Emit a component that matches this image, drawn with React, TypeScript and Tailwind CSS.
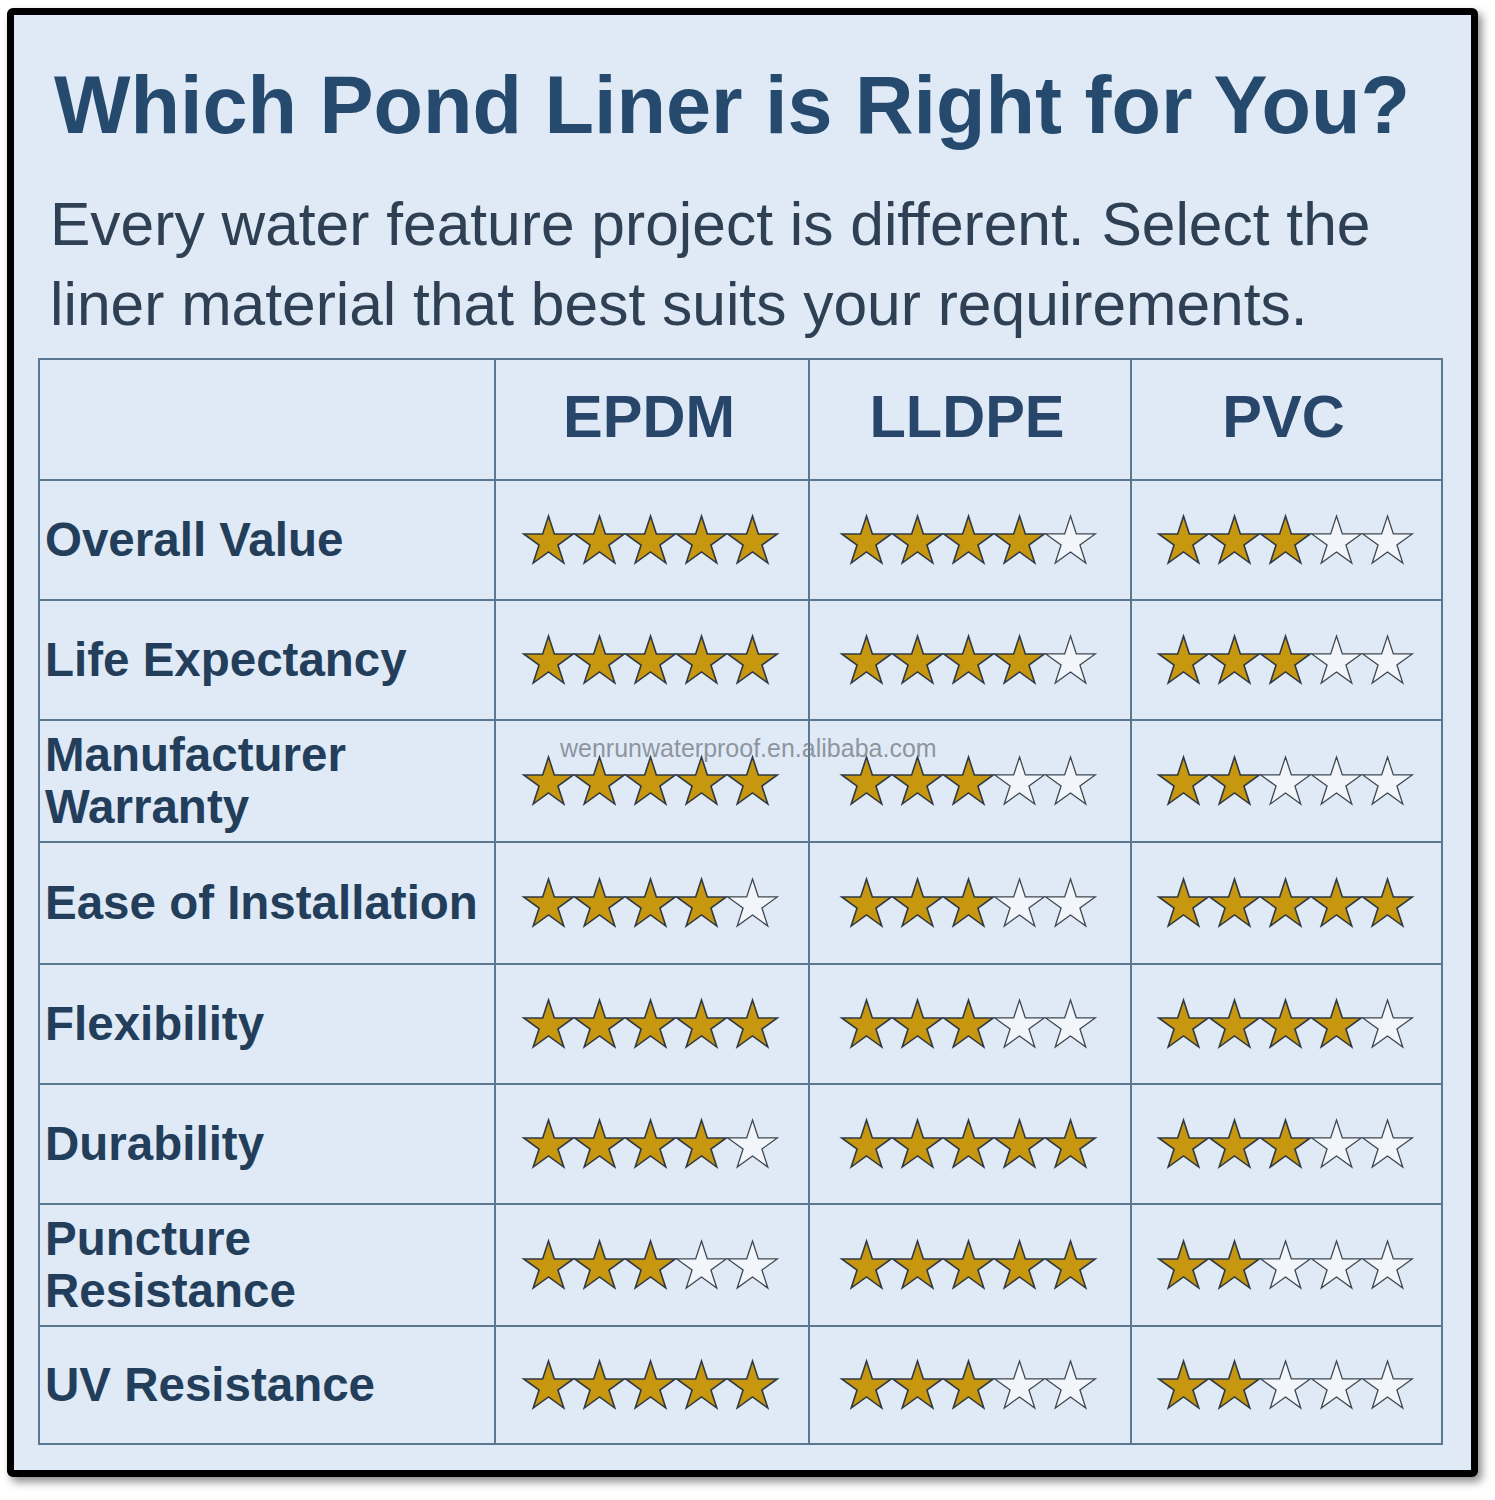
const rows: { label: string[]; ratings: number[] }[] = [
  { label: ["Overall Value"], ratings: [5, 4, 3] },
  { label: ["Life Expectancy"], ratings: [5, 4, 3] },
  { label: ["Manufacturer", "Warranty"], ratings: [5, 3, 2] },
  { label: ["Ease of Installation"], ratings: [4, 3, 5] },
  { label: ["Flexibility"], ratings: [5, 3, 4] },
  { label: ["Durability"], ratings: [4, 5, 3] },
  { label: ["Puncture", "Resistance"], ratings: [3, 5, 2] },
  { label: ["UV Resistance"], ratings: [5, 3, 2] },
];

const STAR_POINTS =
  "25.5,1 31.34,18.97 50.23,18.97 34.94,30.07 40.78,48.03 25.5,36.93 10.22,48.03 16.06,30.07 0.77,18.97 19.66,18.97";

function Star({ filled }: { filled: boolean }) {
  return (
    <svg width="51" height="50" viewBox="0 0 51 50" className="overflow-visible">
      <polygon
        points={STAR_POINTS}
        fill={filled ? "#c7970f" : "#f2f6fa"}
        stroke={filled ? "#2f3a44" : "#3f4852"}
        strokeWidth={filled ? 1.6 : 1.3}
        strokeLinejoin="miter"
      />
    </svg>
  );
}

function Stars({ count }: { count: number }) {
  return (
    <div className="flex items-center">
      {[0, 1, 2, 3, 4].map((i) => (
        <Star key={i} filled={i < count} />
      ))}
    </div>
  );
}

export default function App() {
  return (
    <div className="w-[1495px] h-[1500px] bg-white pt-[8px] pl-[7px] font-['Liberation_Sans',Arial,sans-serif]">
      <div className="relative w-[1471px] h-[1469px] border-[7px] border-black rounded-[6px] bg-[#dfeaf6] shadow-[4px_5px_9px_rgba(0,0,0,0.45)]">
        <div className="pt-[50px] pl-[40px] text-[81px] leading-[80px] font-bold text-[#254a6e] whitespace-nowrap">
          Which Pond Liner is Right for You?
        </div>
        <div className="mt-[39px] pl-[36px] text-[60.5px] leading-[80px] text-[#2f4054] w-[1420px]">
          Every water feature project is different. Select the liner material that best suits your requirements.
        </div>

        <div className="mt-[14px] ml-[24px] w-[1405px] grid grid-cols-[454px_312px_320px_309px] grid-rows-[119px_118px_118px_120px_120px_118px_118px_120px_116px] gap-[2px] p-[2px] bg-[#5a7891]">
          <div className="bg-[#dfeaf6]" />
          {["EPDM", "LLDPE", "PVC"].map((h) => (
            <div
              key={h}
              className="bg-[#dfeaf6] flex items-center justify-center pb-[6px] pr-[6px] text-[59.5px] font-bold text-[#27466a]"
            >
              {h}
            </div>
          ))}
          {rows.map((r) => (
            <>
              <div
                key={r.label.join(" ")}
                className="bg-[#dfeaf6] flex flex-col justify-center pl-[5px] text-[47.5px] leading-[52px] font-bold text-[#233e5a] whitespace-nowrap"
              >
                {r.label.map((l) => (
                  <span key={l}>{l}</span>
                ))}
              </div>
              {r.ratings.map((n, i) => (
                <div key={i} className="bg-[#dfeaf6] flex items-center justify-center pr-[3px]">
                  <Stars count={n} />
                </div>
              ))}
            </>
          ))}
        </div>

        <div className="absolute left-[546px] top-[721px] text-[25px] leading-[25px] text-[rgba(120,126,134,0.8)] whitespace-nowrap">
          wenrunwaterproof.en.alibaba.com
        </div>
      </div>
    </div>
  );
}
